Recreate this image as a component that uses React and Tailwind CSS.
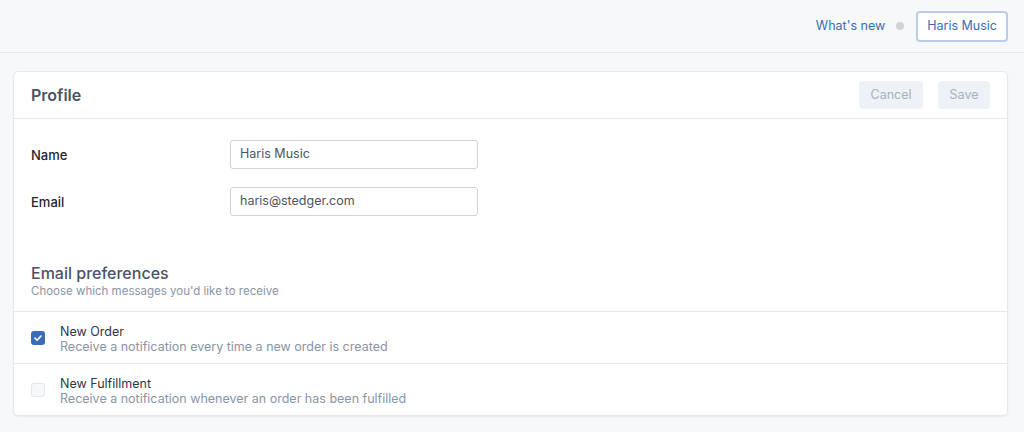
export default function App() {
  return (
    <div className="min-h-[432px] bg-[#f7f8fa] text-[#4a5468]" style={{ fontFamily: "Inter, 'Noto Sans', sans-serif" }}>
      <div className="h-[53px] border-b border-[#e6e8ec] flex items-center justify-end pr-4">
        <span className="text-[12.5px] text-[#3a6db5]">What's new</span>
        <span className="w-[8px] h-[8px] rounded-full bg-[#d0d3d8] ml-[11px] mr-[12px]"></span>
        <button className="h-[31px] px-[9px] rounded-[4px] border-2 border-[#b9cdea] bg-white text-[12.5px] text-[#3a6db5]">Haris Music</button>
      </div>
      <div className="pt-[18px] px-[13px] pr-[16px] pb-4">
        <div className="bg-white rounded-[5px] border border-[#e6e8ec] shadow-[0_1px_2px_rgba(0,0,0,0.06)]">
          <div className="h-[47px] border-b border-[#e6e8ec] flex items-center justify-between pl-[17px] pr-[17px]">
            <h1 className="text-[16px] font-semibold text-[#4a5468]">Profile</h1>
            <div className="flex gap-[15px]">
              <button className="h-[28px] w-[64px] rounded-[4px] bg-[#eef1f5] text-[12.5px] text-[#a8b1bf]">Cancel</button>
              <button className="h-[28px] w-[52px] rounded-[4px] bg-[#eef1f5] text-[12.5px] text-[#a8b1bf]">Save</button>
            </div>
          </div>
          <div className="pl-[17px] pt-[21px] flex flex-col gap-[18px]">
            <div className="flex items-center">
              <label className="w-[199px] pt-[2px] text-[13px] font-medium text-[#1f2633]">Name</label>
              <div className="w-[248px] h-[29px] border border-[#cfd4dc] rounded-[3px] flex items-center px-[9px] text-[12.5px] text-[#4a5468]">Haris Music</div>
            </div>
            <div className="flex items-center">
              <label className="w-[199px] pt-[2px] text-[13px] font-medium text-[#1f2633]">Email</label>
              <div className="w-[248px] h-[29px] border border-[#cfd4dc] rounded-[3px] flex items-center px-[9px] text-[12.5px] text-[#4a5468]">haris@stedger.com</div>
            </div>
          </div>
          <div className="pl-[17px] pt-[46px] pb-[12px] border-b border-[#e6e8ec]">
            <h2 className="text-[16px] font-medium text-[#4a5468] leading-[22px]">Email preferences</h2>
            <p className="text-[11.5px] text-[#8a94a6] leading-[15px]">Choose which messages you'd like to receive</p>
          </div>
          <div className="h-[52px] border-b border-[#e6e8ec] flex items-center pl-[17px]">
            <span className="w-[14px] h-[14px] rounded-[3px] bg-[#3a6db5] flex items-center justify-center">
              <svg width="10" height="10" viewBox="0 0 10 10" fill="none"><path d="M2 5.2 L4.1 7.2 L8 3" stroke="white" strokeWidth="1.6" strokeLinecap="round" strokeLinejoin="round" /></svg>
            </span>
            <div className="ml-[15px] flex flex-col">
              <span className="mt-[3px] text-[12.5px] text-[#2f3747] leading-[15px]">New Order</span>
              <span className="text-[12.5px] text-[#8a94a6] leading-[16px]">Receive a notification every time a new order is created</span>
            </div>
          </div>
          <div className="h-[51px] flex items-center pl-[17px]">
            <span className="w-[14px] h-[14px] rounded-[3px] border border-[#e3e6ea] bg-[#f7f8fa]"></span>
            <div className="ml-[15px] flex flex-col">
              <span className="mt-[3px] text-[12.5px] text-[#2f3747] leading-[15px]">New Fulfillment</span>
              <span className="text-[12.5px] text-[#8a94a6] leading-[16px]">Receive a notification whenever an order has been fulfilled</span>
            </div>
          </div>
        </div>
      </div>
    </div>
  );
}
